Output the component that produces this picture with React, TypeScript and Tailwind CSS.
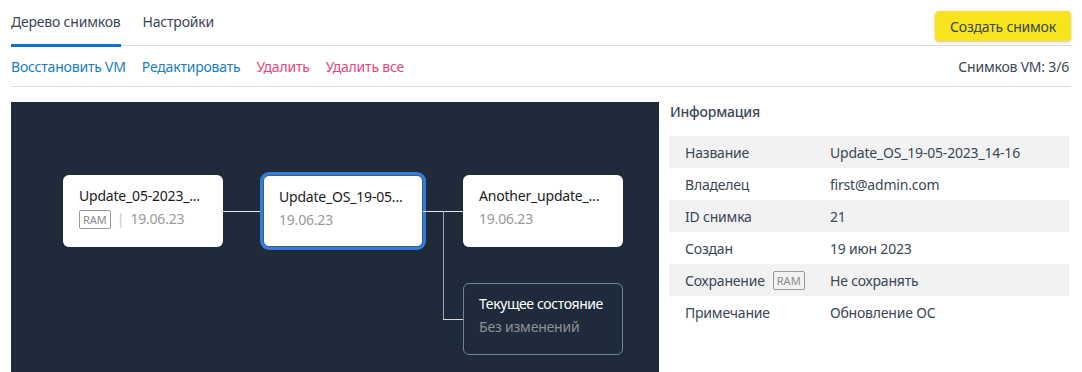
import React from "react";

const font = { fontFamily: '"Noto Sans", "Open Sans", sans-serif' };

function Ram() {
  return (
    <span className="inline-flex h-[19px] items-center rounded-[2px] border border-[#9a9a9a] px-[3px] text-[11px] leading-none tracking-normal text-[#8a8a8a]">
      RAM
    </span>
  );
}

function Card({
  title,
  ram,
  date,
  selected,
}: {
  title: string;
  ram?: boolean;
  date: string;
  selected?: boolean;
}) {
  return (
    <div
      className={
        "flex h-[72px] w-[160px] flex-col rounded-[6px] bg-white px-[16px] pt-[10px] " +
        (selected ? "border border-[#555] pl-[15px] pt-[9px] shadow-[0_0_0_3px_#2b7fe0]" : "")
      }
    >
      <div className="whitespace-nowrap text-[14px] leading-[22px] text-[#1b1b1b]">{title}</div>
      <div className="mt-[2px] flex items-center gap-[6px] text-[14px] leading-[20px] text-[#9a9a9a]">
        {ram && (
          <>
            <Ram />
            <span className="text-[#c8c8c8]">|</span>
          </>
        )}
        <span>{date}</span>
      </div>
    </div>
  );
}

const rows: [string, string, boolean?][] = [
  ["Название", "Update_OS_19-05-2023_14-16"],
  ["Владелец", "first@admin.com"],
  ["ID снимка", "21"],
  ["Создан", "19 июн 2023"],
  ["Сохранение", "Не сохранять", true],
  ["Примечание", "Обновление ОС"],
];

export default function App() {
  return (
    <div
      className="h-[372px] w-[1082px] overflow-hidden bg-white px-[11px] tracking-[-0.2px]"
      style={font}
    >
      {/* Tabs header */}
      <div className="flex h-[46px] items-start justify-between border-b border-[#dcdcdc]">
        <div className="flex h-full gap-[22px] text-[14px] text-[#3b4656]">
          <div className="relative flex h-full items-center pb-[2px]">
            Дерево снимков
            <div className="absolute bottom-[-2px] left-0 right-0 h-[3px] bg-[#0b74c0]" />
          </div>
          <div className="flex h-full items-center pb-[2px]">Настройки</div>
        </div>
        <button className="mt-[11px] h-[30px] w-[136px] rounded-[4px] bg-[#f7e41e] text-[14px] tracking-[-0.2px] text-[#3b4656] shadow-[0_1px_3px_rgba(0,0,0,0.25)]">
          Создать снимок
        </button>
      </div>

      {/* Actions */}
      <div className="flex h-[41px] items-center justify-between border-b border-[#dcdcdc] text-[14px]">
        <div className="flex gap-[16px]">
          <span className="text-[#1a7dc0]">Восстановить VM</span>
          <span className="text-[#1a7dc0]">Редактировать</span>
          <span className="text-[#e2477e]">Удалить</span>
          <span className="text-[#e2477e]">Удалить все</span>
        </div>
        <span className="pr-[2px] text-[#3b4656]">Снимков VM: 3/6</span>
      </div>

      {/* Body */}
      <div className="mt-[15px] flex gap-[10px]">
        <div className="relative h-[300px] w-[648px] shrink-0 bg-[#1f2b3a]">
          <div className="absolute left-[52px] top-[73px] flex items-center">
            <Card title="Update_05-2023_..." ram date="19.06.23" />
            <div className="h-[1px] w-[40px] bg-[#e5e5e5]" />
            <Card title="Update_OS_19-05..." date="19.06.23" selected />
            <div className="h-[1px] w-[40px] bg-[#e5e5e5]" />
            <Card title="Another_update_..." date="19.06.23" />
          </div>
          {/* connector to current state */}
          <div className="absolute left-[432px] top-[109px] h-[109px] w-[1px] bg-[#a0a4aa]" />
          <div className="absolute left-[432px] top-[217px] h-[1px] w-[20px] bg-[#d8d8d8]" />
          <div className="absolute left-[452px] top-[181px] flex h-[72px] w-[160px] flex-col rounded-[6px] border border-[#6b84a0] px-[15px] pt-[9px]">
            <div className="whitespace-nowrap text-[14px] leading-[22px] tracking-[-0.4px] text-white">
              Текущее состояние
            </div>
            <div className="mt-[2px] whitespace-nowrap text-[14px] leading-[20px] text-[#8c9096]">
              Без изменений
            </div>
          </div>
        </div>

        <div className="w-[400px]">
          <div className="h-[20px] pl-[1px] text-[14px] font-medium leading-[20px] text-[#3b4656]">
            Информация
          </div>
          <div className="mt-[14px]">
            {rows.map(([k, v, ram], i) => (
              <div
                key={k}
                className={
                  "flex h-[32px] items-center text-[14px] text-[#3b4656] " +
                  (i % 2 === 0 ? "bg-[#f2f2f2]" : "bg-white")
                }
              >
                <div className="flex w-[161px] shrink-0 items-center gap-[8px] pl-[16px]">
                  {k}
                  {ram && <Ram />}
                </div>
                <div>{v}</div>
              </div>
            ))}
          </div>
        </div>
      </div>
    </div>
  );
}
